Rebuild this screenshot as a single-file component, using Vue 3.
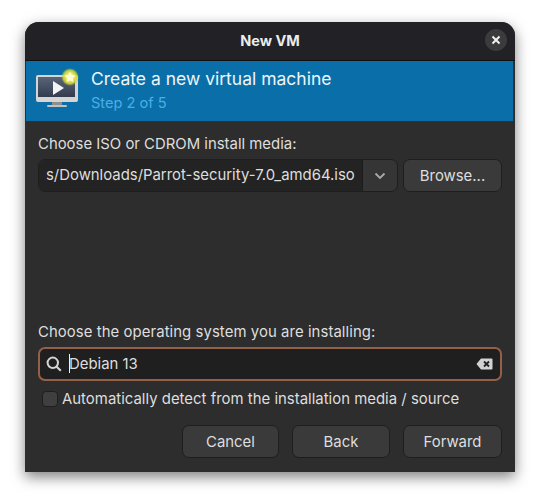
<template>
  <div class="page">
    <div class="window">
      <header class="titlebar">
        <span class="title">New VM</span>
        <button class="close" aria-label="Close">
          <svg width="10" height="10" viewBox="0 0 10 10"><path d="M1.5 1.5l7 7M8.5 1.5l-7 7" stroke="#f2f2f2" stroke-width="2" fill="none"/></svg>
        </button>
      </header>

      <div class="banner">
        <svg class="vm-icon" width="46" height="46" viewBox="0 0 46 46">
          <defs>
            <linearGradient id="screen" x1="0" y1="0" x2="0" y2="1">
              <stop offset="0" stop-color="#59647a"/>
              <stop offset="1" stop-color="#343c4e"/>
            </linearGradient>
            <radialGradient id="glow">
              <stop offset="0.35" stop-color="#f4f27a"/>
              <stop offset="0.75" stop-color="#d9d92e" stop-opacity="0.85"/>
              <stop offset="1" stop-color="#b8c820" stop-opacity="0"/>
            </radialGradient>
          </defs>
          <rect x="1" y="7" width="42" height="27" rx="2" fill="#d5d5d3"/>
          <rect x="3" y="9" width="37" height="20" fill="url(#screen)"/>
          <path d="M18 13l11 7-11 7z" fill="#f4f4f4"/>
          <rect x="17" y="34" width="10" height="3" fill="#8e8e8e"/>
          <rect x="12" y="37" width="20" height="2" rx="1" fill="#c2c2c0"/>
          <circle cx="35" cy="9" r="9" fill="url(#glow)"/>
          <path d="M35 3.5l1.7 3.6 3.9.5-2.9 2.7.8 3.9-3.5-2-3.5 2 .8-3.9-2.9-2.7 3.9-.5z" fill="#fdfbd8"/>
        </svg>
        <div class="banner-text">
          <div class="banner-title">Create a new virtual machine</div>
          <div class="banner-step">Step 2 of 5</div>
        </div>
      </div>

      <main class="content">
        <label class="field-label">Choose ISO or CDROM install media:</label>
        <div class="media-row">
          <div class="combo">
            <div class="combo-text">s/Downloads/Parrot-security-7.0_amd64.iso</div>
            <div class="combo-arrow">
              <svg width="12" height="8" viewBox="0 0 12 8"><path d="M1.5 1.5L6 6l4.5-4.5" stroke="#a9a9ab" stroke-width="1.8" fill="none"/></svg>
            </div>
          </div>
          <button class="btn browse">Browse...</button>
        </div>

        <label class="field-label os-label">Choose the operating system you are installing:</label>
        <div class="search">
          <svg width="16" height="16" viewBox="0 0 16 16"><circle cx="6.8" cy="6.8" r="5.2" stroke="#d4d4d4" stroke-width="2" fill="none"/><path d="M10.4 10.4l4.4 4.4" stroke="#d4d4d4" stroke-width="2.1" fill="none"/></svg>
          <div class="search-text"><span class="caret"></span>Debian 13</div>
          <svg width="17" height="12" viewBox="0 0 17 12"><path d="M5 0.5h10.5a1 1 0 0 1 1 1v9a1 1 0 0 1-1 1H5L0.5 6z" fill="#d2d2d2"/><path d="M8 3.5l5 5M13 3.5l-5 5" stroke="#222" stroke-width="1.8"/></svg>
        </div>

        <div class="check-row">
          <span class="checkbox"></span>
          <span class="check-label">Automatically detect from the installation media / source</span>
        </div>

        <div class="actions">
          <button class="btn cancel">Cancel</button>
          <button class="btn back">Back</button>
          <button class="btn">Forward</button>
        </div>
      </main>
    </div>
  </div>
</template>

<script setup>
</script>

<style>
html, body {
  background: #fff;
}
</style>

<style scoped>
.page {
  width: 540px;
  height: 500px;
  box-sizing: border-box;
  padding: 22px 25px 0;
  overflow: hidden;
}

.window {
  width: 490px;
  height: 450px;
  display: flex;
  flex-direction: column;
  background: #2d2d2d;
  border-radius: 14px 14px 0 0;
  box-shadow: 0 5px 14px rgba(0, 0, 0, 0.5);
  font-family: Inter, "Liberation Sans", sans-serif;
  font-size: 14.9px;
  color: #dedede;
  overflow: hidden;
}

.titlebar {
  height: 38px;
  flex: none;
  display: flex;
  align-items: center;
  justify-content: center;
  position: relative;
  background: #222226;
  border-bottom: 1px solid #111;
}

.title {
  font-weight: 700;
  font-size: 14.5px;
  color: #ececec;
  margin-top: -1px;
}

.close {
  position: absolute;
  right: 8px;
  top: 7px;
  width: 22px;
  height: 22px;
  padding: 0;
  border: 0;
  border-radius: 50%;
  background: #3b3b3e;
  display: flex;
  align-items: center;
  justify-content: center;
}

.banner {
  height: 60px;
  flex: none;
  margin: 0 1px;
  padding-left: 9px;
  display: flex;
  align-items: center;
  gap: 10px;
  background: #0a6fa8;
  border-bottom: 1px solid #0c3a52;
  border-right: 1px solid #0c3a52;
}

.vm-icon {
  flex: none;
}

.banner-title {
  font-size: 17.5px;
  line-height: 22px;
  color: #eef6fb;
  margin-top: -2px;
}

.banner-step {
  font-size: 14.6px;
  line-height: 18px;
  margin-top: 4px;
  color: #4aaee6;
}

.content {
  flex: 1;
  display: flex;
  flex-direction: column;
  padding: 0 13px;
}

.field-label {
  display: block;
  margin-top: 13px;
  line-height: 18px;
}

.media-row {
  display: flex;
  gap: 5px;
  margin-top: 6px;
}

.combo {
  flex: 1;
  height: 33px;
  display: flex;
  box-sizing: border-box;
  border: 1px solid #1e1e1e;
  border-radius: 7px;
  background: #353535;
  overflow: hidden;
}

.combo-text {
  flex: 1;
  padding-left: 7px;
  line-height: 31px;
  white-space: nowrap;
  background: #232323;
  border-right: 1px solid #1c1c1c;
}

.combo-arrow {
  width: 34px;
  display: flex;
  align-items: center;
  justify-content: center;
}

.btn {
  height: 33px;
  width: 99px;
  padding: 0;
  box-sizing: border-box;
  border: 1px solid #1e1e1e;
  border-radius: 7px;
  background: #3a3a3a;
  color: #dedede;
  font: inherit;
}

.cancel {
  width: 97px;
}

.back {
  width: 98px;
}

.os-label {
  margin-top: 131px;
  letter-spacing: 0.07px;
}

.search {
  height: 34px;
  margin-top: 6px;
  padding: 0 7px 0 6px;
  box-sizing: border-box;
  display: flex;
  align-items: center;
  gap: 7px;
  border: 2px solid #95604a;
  border-radius: 7px;
  background: #1f1f1f;
}

.search-text {
  flex: 1;
  position: relative;
}

.caret {
  position: absolute;
  left: 0;
  top: -1px;
  width: 1px;
  height: 19px;
  background: #f0f0f0;
}

.check-row {
  display: flex;
  align-items: center;
  gap: 4px;
  margin-top: 9px;
  padding-left: 4px;
  line-height: 18px;
}

.check-label {
  letter-spacing: 0.02px;
}

.checkbox {
  width: 16px;
  height: 16px;
  box-sizing: border-box;
  border: 1px solid #1e1e1e;
  border-radius: 4px;
  background: #3f3f3f;
}

.actions {
  display: flex;
  justify-content: flex-end;
  gap: 13px;
  margin-top: 17px;
}
</style>
